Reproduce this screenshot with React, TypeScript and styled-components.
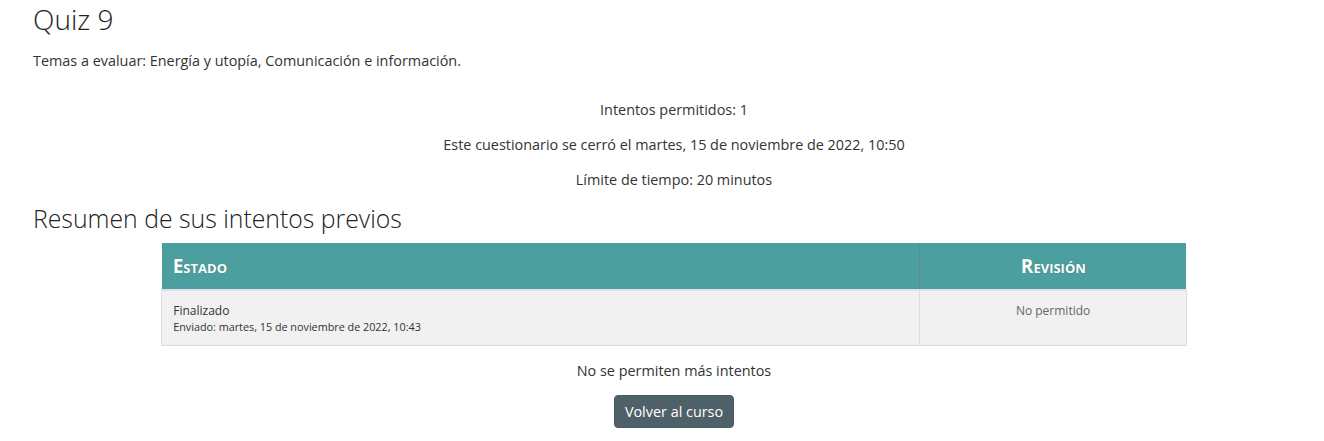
import React from "react";
import styled, { createGlobalStyle } from "styled-components";

const Global = createGlobalStyle`
  html, body { margin: 0; padding: 0; background: #fff; }
  body { font-family: "Open Sans", "Liberation Sans", sans-serif; color: #333; }
`;

const Page = styled.div`
  padding: 0 9px 0 33px;
`;

const Title = styled.h2`
  font-family: "Open Sans", sans-serif;
  font-weight: 300;
  font-size: 28px;
  line-height: 39px;
  margin: 0;
  color: #222;
`;

const Intro = styled.p`
  font-size: 14.4px;
  margin: 12px 0 0 0;
  line-height: 20px;
  color: #333;
`;

const InfoList = styled.div`
  display: flex;
  flex-direction: column;
  align-items: center;
  gap: 15px;
  margin-top: 29px;
`;

const Info = styled.p`
  margin: 0;
  font-size: 14.4px;
  line-height: 20px;
  color: #333;
`;

const Subtitle = styled.h3`
  font-weight: 300;
  font-size: 24.8px;
  line-height: 29px;
  margin: 14px 0 0 0;
  color: #222;
`;

const Table = styled.table`
  width: 80%;
  margin: 10px auto 0;
  border-collapse: collapse;
`;

const Th = styled.th<{ $align: string; $w?: string }>`
  background: #4b9f9e;
  color: #fff;
  font-variant: small-caps;
  font-weight: 700;
  font-size: 19px;
  text-align: ${(p) => p.$align};
  padding: 0 11px;
  height: 46px;
  width: ${(p) => p.$w || "auto"};
  border-right: 1px solid #5c8f8c;
  border-bottom: 2px solid #dee2e6;
  text-shadow: 0 0 1px rgba(0, 0, 0, 0.3);
  &:last-child {
    border-right: none;
  }
`;

const Td = styled.td<{ $align: string }>`
  background: #f1f1f1;
  border: 1px solid #dcdcdc;
  border-top: none;
  vertical-align: top;
  text-align: ${(p) => p.$align};
  padding: 12px 11px 11px;
  font-size: 12px;
  line-height: 16px;
  color: ${(p) => (p.$align === "center" ? "#666" : "#333")};
`;

const Sub = styled.div`
  font-size: 10.8px;
  line-height: 15px;
`;

const Footer = styled.div`
  display: flex;
  flex-direction: column;
  align-items: center;
  margin-top: 15px;
  gap: 14px;
`;

const Button = styled.button`
  font-family: "Open Sans", sans-serif;
  font-size: 14.4px;
  color: #fff;
  background: #4f6168;
  border: 1px solid #4a5a60;
  border-radius: 4px;
  height: 33px;
  padding: 0 10px;
  cursor: pointer;
`;

export default function App() {
  return (
    <>
      <Global />
      <Page>
        <Title>Quiz 9</Title>
        <Intro>Temas a evaluar: Energía y utopía, Comunicación e información.</Intro>
        <InfoList>
          <Info>Intentos permitidos: 1</Info>
          <Info>Este cuestionario se cerró el martes, 15 de noviembre de 2022, 10:50</Info>
          <Info>Límite de tiempo: 20 minutos</Info>
        </InfoList>
        <Subtitle>Resumen de sus intentos previos</Subtitle>
        <Table>
          <thead>
            <tr>
              <Th $align="left" $w="74%">
                Estado
              </Th>
              <Th $align="center">Revisión</Th>
            </tr>
          </thead>
          <tbody>
            <tr>
              <Td $align="left">
                Finalizado
                <Sub>Enviado: martes, 15 de noviembre de 2022, 10:43</Sub>
              </Td>
              <Td $align="center">No permitido</Td>
            </tr>
          </tbody>
        </Table>
        <Footer>
          <Info>No se permiten más intentos</Info>
          <Button>Volver al curso</Button>
        </Footer>
      </Page>
    </>
  );
}
